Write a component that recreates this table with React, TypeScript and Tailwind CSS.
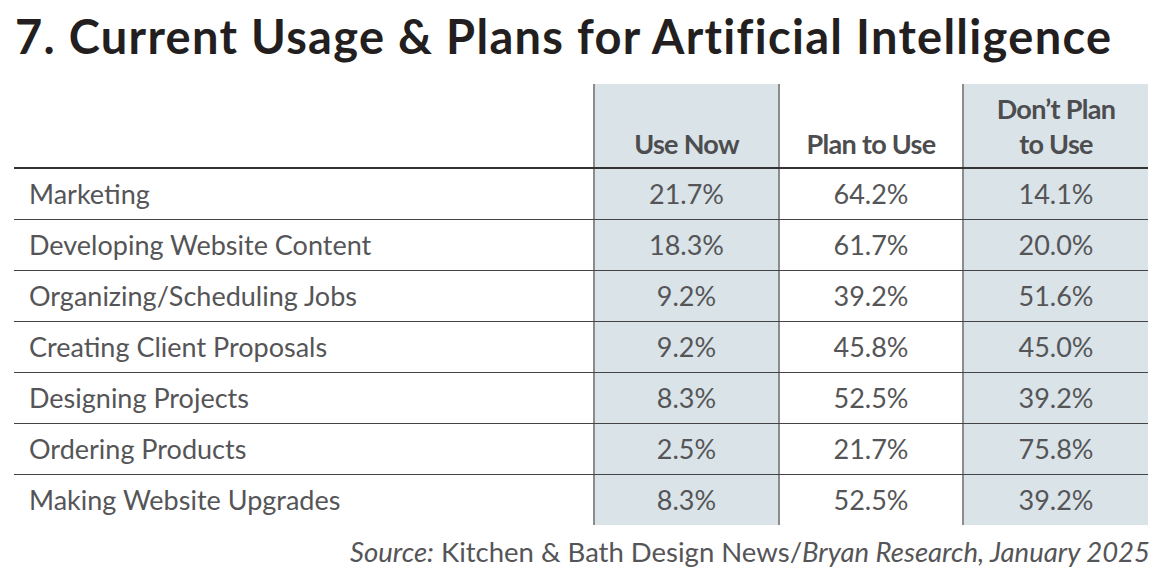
import React from "react";

const rows: [string, string, string, string][] = [
  ["Marketing", "21.7%", "64.2%", "14.1%"],
  ["Developing Website Content", "18.3%", "61.7%", "20.0%"],
  ["Organizing/Scheduling Jobs", "9.2%", "39.2%", "51.6%"],
  ["Creating Client Proposals", "9.2%", "45.8%", "45.0%"],
  ["Designing Projects", "8.3%", "52.5%", "39.2%"],
  ["Ordering Products", "2.5%", "21.7%", "75.8%"],
  ["Making Website Upgrades", "8.3%", "52.5%", "39.2%"],
];

export default function App() {
  return (
    <div
      className="w-[1165px] h-[584px] bg-white overflow-hidden pl-[14px] text-[#555557]"
      style={{ fontFamily: "Lato, 'Open Sans', sans-serif" }}
    >
      <h1 className="pt-[8px] h-[84px] text-[47px] leading-[56px] font-bold text-[#231f20] tracking-[1.3px] pl-[1px] whitespace-nowrap">
        7. Current Usage &amp; Plans for Artificial Intelligence
      </h1>
      <div className="w-[1134px]">
        <div className="grid grid-cols-[579px_185px_184px_186px] h-[85px] border-b-2 border-[#333]">
          <div />
          <div className="bg-[#d9e3e8] border-l-2 border-[#8c8c8c] flex items-end justify-center pb-[6px] text-[27px] leading-[35px] font-bold tracking-[-0.7px] text-[#4d4d4f]">
            Use Now
          </div>
          <div className="border-l-2 border-[#8c8c8c] flex items-end justify-center pb-[6px] text-[27px] leading-[35px] font-bold tracking-[-0.7px] text-[#4d4d4f]">
            Plan to Use
          </div>
          <div className="bg-[#d9e3e8] border-l-2 border-[#8c8c8c] flex items-end justify-center pb-[6px] text-[27px] leading-[35px] font-bold tracking-[-0.7px] text-center text-[#4d4d4f]">
            Don’t Plan
            <br />
            to Use
          </div>
        </div>
        {rows.map((r, i) => (
          <div
            key={r[0]}
            className={
              "grid grid-cols-[579px_185px_184px_186px] " +
              (i < rows.length - 1 ? "h-[51px] border-b border-[#444]" : "h-[50px]")
            }
          >
            <div className="flex items-center pl-[15px] text-[27px]">{r[0]}</div>
            <div className="bg-[#d9e3e8] border-l-2 border-[#8c8c8c] flex items-center justify-center text-[27px]">
              {r[1]}
            </div>
            <div className="border-l-2 border-[#8c8c8c] flex items-center justify-center text-[27px]">
              {r[2]}
            </div>
            <div className="bg-[#d9e3e8] border-l-2 border-[#8c8c8c] flex items-center justify-center text-[27px]">
              {r[3]}
            </div>
          </div>
        ))}
      </div>
      <div className="w-[1136px] text-right text-[27.5px] leading-[54px]">
        <span className="italic">Source:</span> Kitchen &amp; Bath Design News/
        <span className="italic">Bryan Research, January 2025</span>
      </div>
    </div>
  );
}
